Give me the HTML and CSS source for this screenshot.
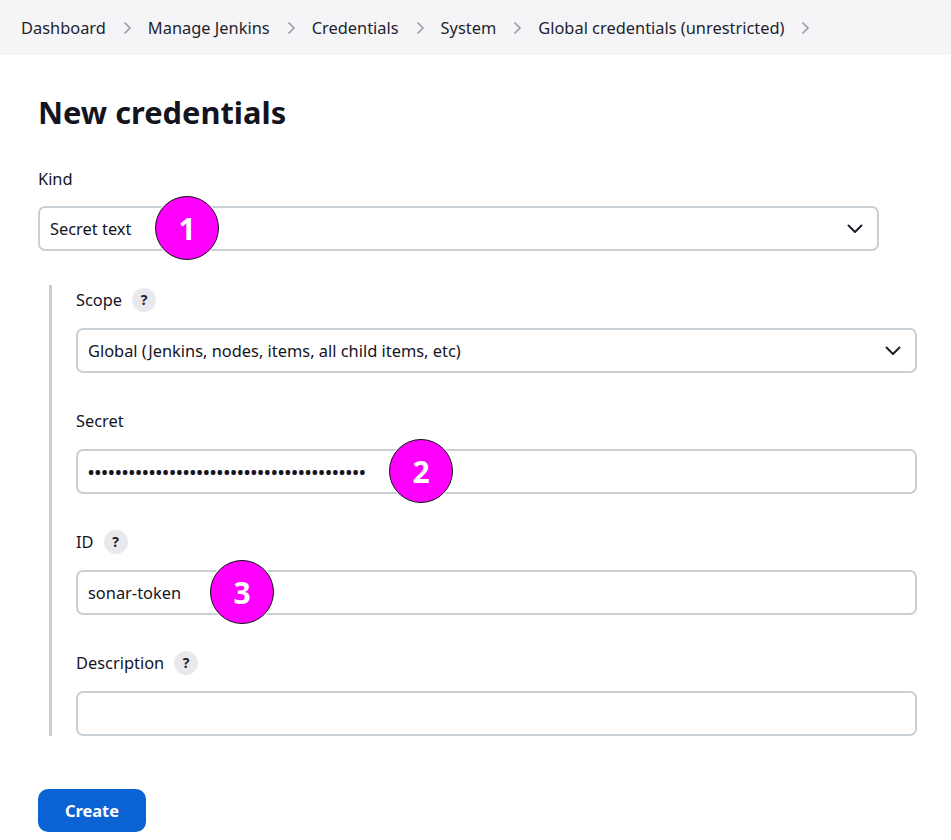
FILE: index.html
```html
<!DOCTYPE html>
<html lang="en">
<head>
<meta charset="utf-8">
<title>New credentials</title>
<link rel="stylesheet" href="styles.css">
</head>
<body>
<nav class="crumbs">
  <span class="crumb">Dashboard</span>
  <svg class="sep" viewBox="0 0 10 14" width="10" height="14"><path d="M2.5 1.5 L8 7 L2.5 12.5" fill="none" stroke="currentColor" stroke-width="1.6"/></svg>
  <span class="crumb">Manage Jenkins</span>
  <svg class="sep" viewBox="0 0 10 14" width="10" height="14"><path d="M2.5 1.5 L8 7 L2.5 12.5" fill="none" stroke="currentColor" stroke-width="1.6"/></svg>
  <span class="crumb">Credentials</span>
  <svg class="sep" viewBox="0 0 10 14" width="10" height="14"><path d="M2.5 1.5 L8 7 L2.5 12.5" fill="none" stroke="currentColor" stroke-width="1.6"/></svg>
  <span class="crumb">System</span>
  <svg class="sep" viewBox="0 0 10 14" width="10" height="14"><path d="M2.5 1.5 L8 7 L2.5 12.5" fill="none" stroke="currentColor" stroke-width="1.6"/></svg>
  <span class="crumb">Global credentials (unrestricted)</span>
  <svg class="sep" viewBox="0 0 10 14" width="10" height="14"><path d="M2.5 1.5 L8 7 L2.5 12.5" fill="none" stroke="currentColor" stroke-width="1.6"/></svg>
</nav>

<main class="page">
  <h1 class="title">New credentials</h1>

  <div class="field field-kind">
    <div class="label">Kind</div>
    <div class="control select">
      <span>Secret text</span>
      <svg class="chev" viewBox="0 0 16 10" width="16" height="10"><path d="M1.5 1.5 L8 8 L14.5 1.5" fill="none" stroke="currentColor" stroke-width="2" stroke-linecap="round" stroke-linejoin="round"/></svg>
      <div class="marker m1">1</div>
    </div>
  </div>

  <section class="nested">
    <div class="field">
      <div class="label">Scope <span class="help">?</span></div>
      <div class="control select">
        <span>Global (Jenkins, nodes, items, all child items, etc)</span>
        <svg class="chev" viewBox="0 0 16 10" width="16" height="10"><path d="M1.5 1.5 L8 8 L14.5 1.5" fill="none" stroke="currentColor" stroke-width="2" stroke-linecap="round" stroke-linejoin="round"/></svg>
      </div>
    </div>

    <div class="field">
      <div class="label">Secret</div>
      <div class="control">
        <span class="dots">•••••••••••••••••••••••••••••••••••••••••</span>
        <div class="marker m2">2</div>
      </div>
    </div>

    <div class="field">
      <div class="label">ID <span class="help">?</span></div>
      <div class="control">
        <span>sonar-token</span>
        <div class="marker m3">3</div>
      </div>
    </div>

    <div class="field last">
      <div class="label">Description <span class="help">?</span></div>
      <div class="control"></div>
    </div>
  </section>

  <button class="btn">Create</button>
</main>
</body>
</html>
```

FILE: styles.css
```css
* { box-sizing: border-box; }

body {
  margin: 0;
  font-family: "Noto Sans", "Open Sans", sans-serif;
  color: #14141f;
  background: #fff;
}

.crumbs {
  height: 55px;
  background: #f5f5f7;
  display: flex;
  align-items: center;
  padding-left: 21px;
  gap: 16px;
  font-size: 16.4px;
}

.crumb { color: #1f1f2e; }

.sep { color: #9a9ca6; }

.page {
  padding: 0 0 0 38px;
}

.title {
  margin: 0;
  padding-top: 39px;
  font-size: 30.8px;
  line-height: 36px;
  font-weight: 700;
  color: #14141f;
}

.field-kind {
  margin-top: 37px;
  width: 841px;
}

.label {
  display: flex;
  align-items: center;
  gap: 10px;
  font-size: 16.4px;
  line-height: 24px;
  height: 24px;
  margin-bottom: 15px;
}

.help {
  width: 24px;
  height: 24px;
  border-radius: 50%;
  background: #e9e9ed;
  display: inline-flex;
  align-items: center;
  justify-content: center;
  font-size: 14px;
  font-weight: 700;
  color: #1f1f2e;
}

.control {
  position: relative;
  height: 45px;
  border: 2px solid #c9d0d5;
  border-radius: 7px;
  display: flex;
  align-items: center;
  padding: 0 10px;
  font-size: 16.4px;
  color: #14141f;
}

.select {
  justify-content: space-between;
  padding-right: 14px;
}

.chev { color: #1f1f2e; }

.nested {
  margin-top: 34px;
  margin-left: 11px;
  border-left: 3px solid #c9ced3;
  padding-left: 24px;
  padding-top: 3px;
  width: 868px;
}

.nested .field { margin-bottom: 36px; }
.nested .field.last { margin-bottom: 0; }
.nested .field .label { margin-bottom: 16px; }

.dots {
  letter-spacing: 0.62px;
  font-size: 16.4px;
  font-weight: 700;
}

.marker {
  position: absolute;
  width: 64px;
  height: 64px;
  border-radius: 50%;
  background: #ff00ff;
  border: 1.5px solid #111;
  box-shadow: 0 0 0 1px #fff;
  color: #fff;
  font-weight: 700;
  font-size: 30px;
  display: flex;
  align-items: center;
  justify-content: center;
  top: -12px;
}

.m1 { left: 115px; }
.m2 { left: 311px; }
.m3 { left: 132px; }

.btn {
  display: block;
  margin-top: 53px;
  width: 108px;
  height: 43px;
  border: none;
  border-radius: 10px;
  background: #0b63d3;
  color: #fff;
  font-family: "Noto Sans", sans-serif;
  font-size: 16.4px;
  font-weight: 700;
}
```
